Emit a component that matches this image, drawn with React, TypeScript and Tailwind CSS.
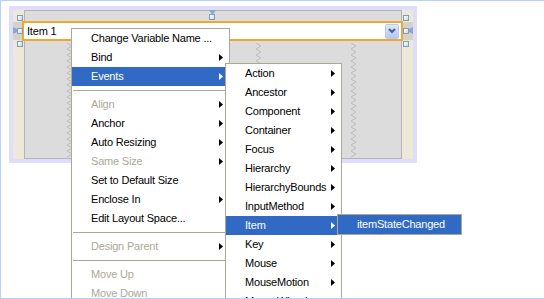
import type { ReactNode } from 'react'

type Row =
  | { kind: 'item'; label: string; arrow?: boolean; disabled?: boolean; active?: boolean }
  | { kind: 'sep' }

const MAIN_MENU: Row[] = [
  { kind: 'item', label: 'Change Variable Name ...' },
  { kind: 'item', label: 'Bind', arrow: true },
  { kind: 'item', label: 'Events', arrow: true, active: true },
  { kind: 'sep' },
  { kind: 'item', label: 'Align', arrow: true, disabled: true },
  { kind: 'item', label: 'Anchor', arrow: true },
  { kind: 'item', label: 'Auto Resizing', arrow: true },
  { kind: 'item', label: 'Same Size', arrow: true, disabled: true },
  { kind: 'item', label: 'Set to Default Size' },
  { kind: 'item', label: 'Enclose In', arrow: true },
  { kind: 'item', label: 'Edit Layout Space...' },
  { kind: 'sep' },
  { kind: 'item', label: 'Design Parent', arrow: true, disabled: true },
  { kind: 'sep' },
  { kind: 'item', label: 'Move Up', disabled: true },
  { kind: 'item', label: 'Move Down', disabled: true },
]

const EVENTS = [
  'Action',
  'Ancestor',
  'Component',
  'Container',
  'Focus',
  'Hierarchy',
  'HierarchyBounds',
  'InputMethod',
  'Item',
  'Key',
  'Mouse',
  'MouseMotion',
  'MouseWheel',
]

function Arrow({ white }: { white?: boolean }) {
  return (
    <svg width="4" height="7" viewBox="0 0 4 7" className="absolute right-[6px] top-[6px]">
      <path d="M0 0 L4 3.5 L0 7 Z" fill={white ? '#ffffff' : '#000000'} />
    </svg>
  )
}

function MenuRows({ rows }: { rows: Row[] }) {
  return (
    <>
      {rows.map((row, i) =>
        row.kind === 'sep' ? (
          <div key={i} className="flex h-[9px] items-center px-px">
            <div className="h-px w-full bg-[#aca899]" />
          </div>
        ) : (
          <div
            key={i}
            className={`relative flex h-[19px] items-center whitespace-nowrap pl-[19px] ${
              row.active ? 'bg-[#316ac5] text-white' : row.disabled ? 'text-[#aca899]' : 'text-black'
            }`}
          >
            {row.label}
            {row.arrow ? <Arrow white={row.active} /> : null}
          </div>
        ),
      )}
    </>
  )
}

function Handle({ className }: { className: string }) {
  return (
    <div
      className={`absolute h-[6px] w-[6px] border border-[#7f9db9] bg-gradient-to-br from-white to-[#c9d7ec] ${className}`}
    />
  )
}

function Zigzag({ left }: { left: number }) {
  const pts: string[] = []
  for (let y = 0; y <= 114; y += 3) {
    pts.push(`${(y / 3) % 2 === 0 ? 1 : 6},${y}`)
  }
  return (
    <svg
      width="8"
      height="115"
      viewBox="0 0 8 115"
      className="absolute top-[32px]"
      style={{ left }}
    >
      <polyline points={pts.join(' ')} fill="none" stroke="#bdbdbd" strokeWidth="1" />
    </svg>
  )
}

function Panel({ children, className }: { children: ReactNode; className: string }) {
  return <div className={`absolute border border-[#aca899] bg-white ${className}`}>{children}</div>
}

export default function App() {
  return (
    <div className="relative h-[299px] w-[544px] overflow-hidden border-b border-l border-t border-[#b9d1f4] bg-white font-['Liberation_Sans',Arial,sans-serif] text-[11px] leading-none tracking-[-0.2px]">
      {/* design canvas */}
      <div className="ml-[8px] mt-[5px] h-[157px] w-[408px] bg-[#dedefc] p-[4px]">
        <div className="relative h-full bg-[#ece9d8] px-[11px]">
          <div className="relative h-full border border-[#b4b4b4] bg-[#dcdcdc]">
            <Zigzag left={41} />
            <Zigzag left={230} />
            <Zigzag left={325} />
          </div>

          {/* side markers */}
          <div className="absolute left-0 top-[12px] h-[18px] w-[9px] bg-[#d6d3c6]" />
          <div className="absolute left-[390px] top-[12px] h-[18px] w-[10px] bg-[#d6d3c6]" />
          <svg width="7" height="7" viewBox="0 0 7 7" className="absolute left-0 top-[17px]">
            <path d="M0 0 L7 3.5 L0 7 Z" fill="#8aa6d4" />
          </svg>
          <svg width="7" height="7" viewBox="0 0 7 7" className="absolute left-[393px] top-[17px]">
            <path d="M7 0 L0 3.5 L7 7 Z" fill="#8aa6d4" />
          </svg>
          <svg width="7" height="5" viewBox="0 0 7 5" className="absolute left-[196px] top-0">
            <path d="M0 0 L7 0 L3.5 5 Z" fill="#8aa6d4" />
          </svg>

          {/* combo box */}
          <div className="absolute left-[9px] top-[11px] flex h-[20px] w-[381px] items-center border-2 border-[#f5a631] bg-white pl-[3px]">
            <span className="text-black">Item 1</span>
            <div className="ml-auto mr-[2px] flex h-[15px] w-[14px] items-center justify-center rounded-[2px] border border-[#b9cdf4] bg-gradient-to-b from-[#dce6fc] to-[#b4c8f6]">
              <svg width="8" height="6" viewBox="0 0 8 6">
                <path d="M1 1 L4 4 L7 1" fill="none" stroke="#4d6185" strokeWidth="2" />
              </svg>
            </div>
          </div>

          <Handle className="left-[4px] top-[5px]" />
          <Handle className="left-[4px] top-[18px]" />
          <Handle className="left-[4px] top-[31px]" />
          <Handle className="left-[390px] top-[5px]" />
          <Handle className="left-[390px] top-[18px]" />
          <Handle className="left-[390px] top-[31px]" />
          <Handle className="left-[196px] top-[4px]" />
        </div>
      </div>

      {/* context menu */}
      <Panel className="left-[70px] top-[27px] w-[159px]">
        <MenuRows rows={MAIN_MENU} />
      </Panel>

      {/* events submenu */}
      <Panel className="left-[224px] top-[62px] w-[117px]">
        <MenuRows
          rows={EVENTS.map((label) => ({
            kind: 'item' as const,
            label,
            arrow: true,
            active: label === 'Item',
          }))}
        />
      </Panel>

      {/* item submenu */}
      <Panel className="left-[336px] top-[213px] h-[21px] w-[125px] !bg-[#316ac5]">
        <div className="flex h-full items-center pl-[19px] text-white">itemStateChanged</div>
      </Panel>
    </div>
  )
}
